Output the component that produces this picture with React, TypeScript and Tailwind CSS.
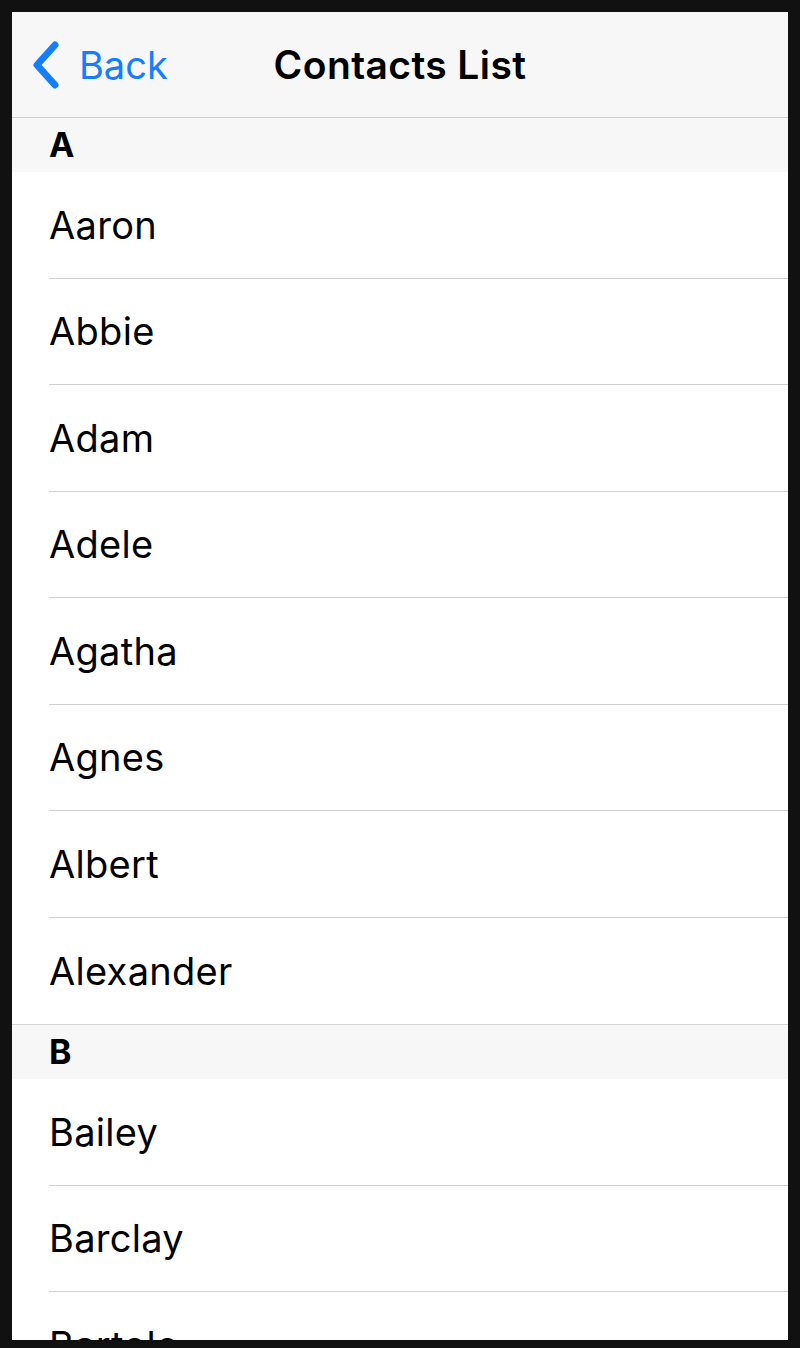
const sections = [
  {
    letter: "A",
    names: ["Aaron", "Abbie", "Adam", "Adele", "Agatha", "Agnes", "Albert", "Alexander"],
  },
  {
    letter: "B",
    names: ["Bailey", "Barclay", "Bartolo", "Bella", "Benjamin"],
  },
];

function BackChevron() {
  return (
    <svg width="30" height="50" viewBox="0 0 30 50" fill="none" className="shrink-0">
      <path
        d="M25 5 L7 25 L25 45"
        stroke="#147EFB"
        strokeWidth="7"
        strokeLinecap="round"
        strokeLinejoin="round"
      />
    </svg>
  );
}

export default function App() {
  return (
    <div className="w-[800px] h-[1348px] bg-[#111111] pt-[12px] px-[12px] pb-[8px] font-['Inter','Noto_Sans',sans-serif]">
      <div className="h-full bg-white overflow-hidden flex flex-col">
        {/* Nav bar */}
        <div className="relative h-[106px] shrink-0 bg-[#f7f7f7] border-b border-[#cfcfcf] flex items-center">
          <div className="flex items-center gap-[19px] pl-[18px] text-[#147efb]">
            <BackChevron />
            <span className="text-[38px] leading-none">Back</span>
          </div>
          <h1 className="absolute inset-x-0 text-center text-[39px] font-semibold text-black leading-none tracking-[0.4px] pointer-events-none">
            Contacts List
          </h1>
        </div>

        {sections.map((section, i) => (
          <div key={section.letter}>
            <div
              className={
                i > 0
                  ? "h-[55px] bg-[#f7f7f7] border-t border-[#d4d4d4] flex items-center pl-[37px]"
                  : "h-[54px] bg-[#f7f7f7] flex items-center pl-[37px]"
              }
            >
              <span className="text-[34px] font-bold text-black leading-none">{section.letter}</span>
            </div>
            {section.names.map((name, j) => (
              <div
                key={name}
                className={
                  j < section.names.length - 1
                    ? "ml-[37px] h-[106.5px] border-b border-[#d0d0d0] flex items-center"
                    : "ml-[37px] h-[106.5px] flex items-center"
                }
              >
                <span className="text-[38px] text-black leading-none tracking-[0.3px]">{name}</span>
              </div>
            ))}
          </div>
        ))}
      </div>
    </div>
  );
}
